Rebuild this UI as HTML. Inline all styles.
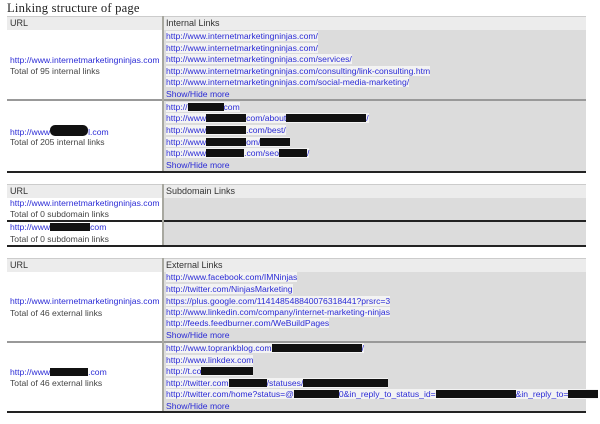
<!DOCTYPE html>
<html><head><style>
body{margin:0;width:600px;height:424px;background:#fff;position:relative;overflow:hidden;font-family:"Liberation Sans",sans-serif;font-size:8.6px;color:#333}
div{position:absolute;box-sizing:border-box}
.t{left:7px;font-family:"Liberation Serif",serif;font-size:12.6px;color:#222;letter-spacing:0.2px}
.hd{left:7px;width:579px;height:14px;background:#ececec;border-top:1px solid #ccc}
.hl{left:10px;line-height:14px;color:#333;font-size:9px}
.hr{left:166px;line-height:14px;color:#333;font-size:9px}
.L{left:7px;width:155px;background:#fff}
.R{left:164px;width:422px;background:#dcdcdc}
.dv{left:162px;width:2px;background:#a8a8a0}
.ln{height:2px;left:7px;width:579px;background:#222}
.k{white-space:nowrap;color:#2b2bd6;line-height:11px}
.k span.b{background:#f3f3f3}
.x{display:inline-block;background:#111;height:8px;vertical-align:-1px}
.g{color:#444;white-space:nowrap;line-height:11px}
</style></head><body>
<div class="t" style="top:1px">Linking structure of page</div>

<div class="hd" style="top:16px"></div>
<div class="hl" style="top:16px">URL</div>
<div class="hr" style="top:16px">Internal Links</div>
<div class="L" style="top:30px;height:70px"></div>
<div class="R" style="top:30px;height:70px"></div>
<div style="left:7px;top:99px;width:579px;height:2px;background:#999"></div>
<div class="L" style="top:101px;height:70px"></div>
<div class="R" style="top:101px;height:70px"></div>
<div class="dv" style="top:16px;height:155px"></div>
<div class="ln" style="top:171px"></div>
<div class="k" style="left:10px;top:55px">http://www.internetmarketingninjas.com</div>
<div class="g" style="left:10px;top:66px">Total of 95 internal links</div>
<div class="k" style="left:10px;top:125px">http://www<span class="x" style="width:38px;border-radius:5px;height:11px"></span>l.com</div>
<div class="g" style="left:10px;top:137px">Total of 205 internal links</div>
<div class="k" style="left:166px;top:31px"><span class="b">http://www.internetmarketingninjas.com/</span></div>
<div class="k" style="left:166px;top:43px"><span class="b">http://www.internetmarketingninjas.com/</span></div>
<div class="k" style="left:166px;top:54px"><span class="b">http://www.internetmarketingninjas.com/services/</span></div>
<div class="k" style="left:166px;top:66px"><span class="b">http://www.internetmarketingninjas.com/consulting/link-consulting.htm</span></div>
<div class="k" style="left:166px;top:77px"><span class="b">http://www.internetmarketingninjas.com/social-media-marketing/</span></div>
<div class="k" style="left:166px;top:89px">Show/Hide more</div>
<div class="k" style="left:166px;top:102px"><span class="b">http://<span class="x" style="width:36px"></span>com</span></div>
<div class="k" style="left:166px;top:113px"><span class="b">http://www<span class="x" style="width:40px"></span>com/about<span class="x" style="width:80px"></span>/</span></div>
<div class="k" style="left:166px;top:125px"><span class="b">http://www<span class="x" style="width:40px"></span>.com/best/</span></div>
<div class="k" style="left:166px;top:137px"><span class="b">http://www<span class="x" style="width:40px"></span>om/<span class="x" style="width:30px"></span></span></div>
<div class="k" style="left:166px;top:148px"><span class="b">http://www<span class="x" style="width:38px"></span>.com/seo<span class="x" style="width:28px"></span>/</span></div>
<div class="k" style="left:166px;top:160px">Show/Hide more</div>

<div class="hd" style="top:184px"></div>
<div class="hl" style="top:184px">URL</div>
<div class="hr" style="top:184px">Subdomain Links</div>
<div class="L" style="top:198px;height:22px"></div>
<div class="R" style="top:198px;height:22px"></div>
<div class="ln" style="top:220px"></div>
<div class="L" style="top:222px;height:23px"></div>
<div class="R" style="top:222px;height:23px"></div>
<div class="dv" style="top:184px;height:61px"></div>
<div class="ln" style="top:245px"></div>
<div class="k" style="left:10px;top:198px">http://www.internetmarketingninjas.com</div>
<div class="g" style="left:10px;top:209px">Total of 0 subdomain links</div>
<div class="k" style="left:10px;top:222px">http://www<span class="x" style="width:40px"></span>com</div>
<div class="g" style="left:10px;top:234px">Total of 0 subdomain links</div>

<div class="hd" style="top:258px"></div>
<div class="hl" style="top:258px">URL</div>
<div class="hr" style="top:258px">External Links</div>
<div class="L" style="top:272px;height:70px"></div>
<div class="R" style="top:272px;height:70px"></div>
<div style="left:7px;top:341px;width:579px;height:2px;background:#999"></div>
<div class="L" style="top:343px;height:69px"></div>
<div class="R" style="top:343px;height:69px"></div>
<div class="dv" style="top:258px;height:154px"></div>
<div class="ln" style="top:411px"></div>
<div class="k" style="left:10px;top:296px">http://www.internetmarketingninjas.com</div>
<div class="g" style="left:10px;top:308px">Total of 46 external links</div>
<div class="k" style="left:10px;top:367px">http://www<span class="x" style="width:38px"></span>.com</div>
<div class="g" style="left:10px;top:378px">Total of 46 external links</div>
<div class="k" style="left:166px;top:272px"><span class="b">http://www.facebook.com/IMNinjas</span></div>
<div class="k" style="left:166px;top:284px"><span class="b">http://twitter.com/NinjasMarketing</span></div>
<div class="k" style="left:166px;top:296px"><span class="b">https://plus.google.com/114148548840076318441?prsrc=3</span></div>
<div class="k" style="left:166px;top:307px"><span class="b">http://www.linkedin.com/company/internet-marketing-ninjas</span></div>
<div class="k" style="left:166px;top:318px"><span class="b">http://feeds.feedburner.com/WeBuildPages</span></div>
<div class="k" style="left:166px;top:330px">Show/Hide more</div>
<div class="k" style="left:166px;top:343px"><span class="b">http://www.toprankblog.com<span class="x" style="width:90px"></span>/</span></div>
<div class="k" style="left:166px;top:355px"><span class="b">http://www.linkdex.com</span></div>
<div class="k" style="left:166px;top:366px"><span class="b">http://t.co<span class="x" style="width:52px"></span></span></div>
<div class="k" style="left:166px;top:378px"><span class="b">http://twitter.com<span class="x" style="width:38px"></span>/statuses/<span class="x" style="width:85px"></span></span></div>
<div class="k" style="left:166px;top:389px"><span class="b">http://twitter.com/home?status=@<span class="x" style="width:45px"></span>0&amp;in_reply_to_status_id=<span class="x" style="width:80px"></span>&amp;in_reply_to=<span class="x" style="width:30px"></span></span></div>
<div class="k" style="left:166px;top:401px">Show/Hide more</div>
</body></html>
